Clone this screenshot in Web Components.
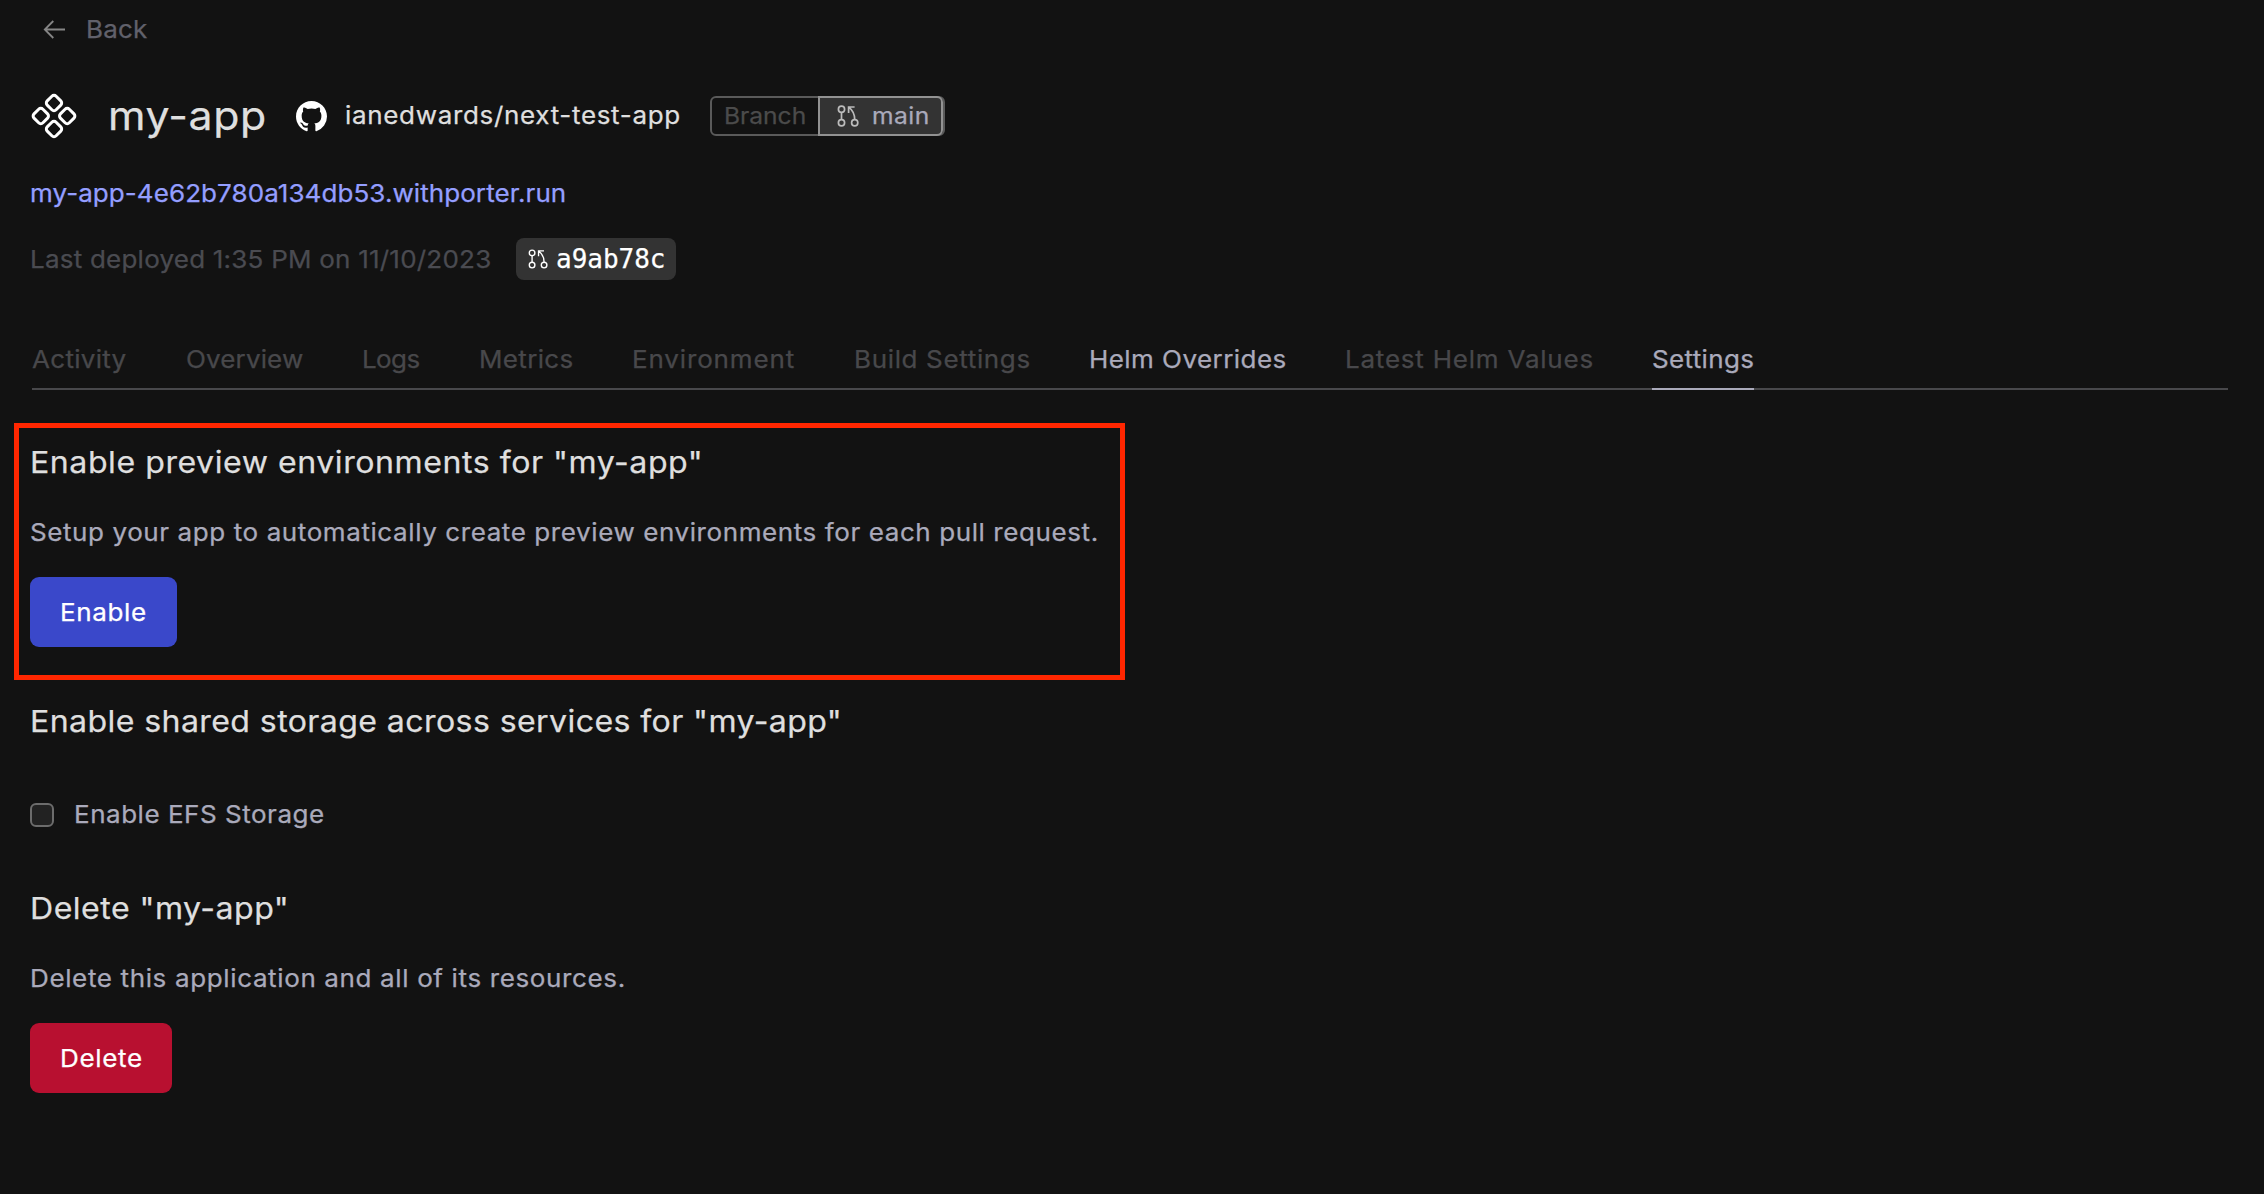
<!DOCTYPE html>
<html lang="en">
<head>
<meta charset="utf-8">
<title>my-app</title>
<style>
html,body{margin:0;height:100%;background:#121212;overflow:hidden}
body{font-family:Inter,"Liberation Sans",sans-serif;color:#dfdfdf}
</style>
</head>
<body>
<app-page></app-page>
<script>
const define=(name,html,setup)=>customElements.define(name,class extends HTMLElement{
  connectedCallback(){
    if(this.shadowRoot)return;
    this.attachShadow({mode:'open'}).innerHTML=html;
    if(setup)setup.call(this,this.shadowRoot);
  }
});

/* A single line of text, slightly widened and tracked out to a given width. */
define('fit-text',`<style>:host{display:block;white-space:pre;font-size:24.3px;line-height:32px}span{display:inline-block;transform-origin:0 50%;-webkit-text-stroke:.25px currentColor}</style><span></span>`,function(root){
  const s=root.querySelector('span'),w=+this.getAttribute('w'),t=this.getAttribute('text');
  const inset=+(this.getAttribute('inset')??.4),k=+(this.getAttribute('stretch')??1.07);
  s.textContent=t;
  this.style.width=w+'px';
  const n=s.getBoundingClientRect().width;
  s.style.letterSpacing=(((w-2*inset)/k-n)/(t.length-1)).toFixed(4)+'px';
  s.style.marginLeft=inset+'px';
  s.style.transform='scaleX('+k+')';
});

define('pr-icon',`<style>:host{display:block;flex:none}svg{display:block;width:100%;height:100%}</style>
<svg viewBox="0 0 22 22" fill="none" stroke="currentColor" stroke-width="var(--sw,1.7)"><circle cx="4.5" cy="4.3" r="3.1"/><circle cx="4.5" cy="17.7" r="3.1"/><circle cx="17.7" cy="17.7" r="3.1"/><path d="M4.5 7.4v7.2M17.7 14.6C17.7 9 16 5.5 12 2.4M11.6 8V2h6"/></svg>`);

define('app-back',`<style>:host{display:flex;align-items:center;height:30px;padding-left:13px;gap:21px;color:#61616b}svg{display:block}fit-text{margin-bottom:1px}</style>
<svg width="22" height="20" viewBox="0 0 22 20" fill="none" stroke="#868686" stroke-width="1.8"><path d="M22 10.5H2M10.3 2 1.8 10.5l8.5 8.5"/></svg><fit-text w="62" text="Back"></fit-text>`);

define('branch-badge',`<style>
:host{display:flex;box-sizing:border-box;width:235px;height:40px;border:2px solid #5a5a5a;border-radius:6px;background:#121212}
.l{width:106px;padding:4px 0 0 12px;box-sizing:border-box;color:#4b4b4b}
.r{display:flex;box-sizing:border-box;width:125px;height:40px;margin-top:-2px;border:2px solid #929292;border-radius:0 6px 6px 0;background:#333;padding:4px 0 0 17px;gap:13px;color:#aaaabb}
pr-icon{width:22px;height:22px;margin-top:3px;color:#bcbcbc}
fit-text{font-size:23px;line-height:28px}
</style><div class="l"><fit-text w="83" text="Branch"></fit-text></div><div class="r"><pr-icon></pr-icon><fit-text w="58" text="main"></fit-text></div>`);

define('app-header',`<style>
:host{display:flex;height:50px;align-items:center}
.logo{width:46px;height:46px;margin-left:1px}
.h{font-size:40px;line-height:50px;margin-left:31px}
.gh{margin-left:29px}
.repo{margin:0 0 2px 18px}
branch-badge{margin-left:29px}
svg{display:block}
</style>
<svg class="logo" viewBox="0 0 46 46" fill="none" stroke="#fff" stroke-width="3"><rect x="-6.3" y="-6.3" width="12.6" height="12.6" rx="3" transform="translate(23 10) rotate(45)"/><rect x="-6.3" y="-6.3" width="12.6" height="12.6" rx="3" transform="translate(23 36) rotate(45)"/><rect x="-6.3" y="-6.3" width="12.6" height="12.6" rx="3" transform="translate(9.8 23) rotate(45)"/><rect x="-6.3" y="-6.3" width="12.6" height="12.6" rx="3" transform="translate(36.2 23) rotate(45)"/></svg>
<fit-text class="h" w="159" text="my-app"></fit-text>
<svg class="gh" width="31" height="31" viewBox="0 0 16 16" fill="#fff"><path d="M8 0C3.58 0 0 3.58 0 8c0 3.54 2.29 6.53 5.47 7.59.4.07.55-.17.55-.38 0-.19-.01-.82-.01-1.49-2.01.37-2.53-.49-2.69-.94-.09-.23-.48-.94-.82-1.13-.28-.15-.68-.52-.01-.53.63-.01 1.08.58 1.23.82.72 1.21 1.87.87 2.33.66.07-.52.28-.87.51-1.07-1.78-.2-3.64-.89-3.64-3.95 0-.87.31-1.59.82-2.15-.08-.2-.36-1.02.08-2.12 0 0 .67-.21 2.2.82.64-.18 1.32-.27 2-.27s1.36.09 2 .27c1.53-1.04 2.2-.82 2.2-.82.44 1.1.16 1.92.08 2.12.51.56.82 1.27.82 2.15 0 3.07-1.87 3.75-3.65 3.95.29.25.54.73.54 1.48 0 1.07-.01 1.93-.01 2.2 0 .21.15.46.55.38A8.01 8.01 0 0 0 16 8c0-4.42-3.58-8-8-8z"/></svg>
<fit-text class="repo" w="336" text="ianedwards/next-test-app"></fit-text>
<branch-badge></branch-badge>`);

define('deploy-info',`<style>
:host{display:flex;align-items:center;height:42px;color:#4a4b51;gap:24px}
.chip{display:flex;box-sizing:border-box;width:160px;height:42px;border-radius:8px;background:#333;color:#fff;align-items:center;padding-left:12px;gap:8px}
pr-icon{width:20px;height:20px;--sw:1.5}
.chip fit-text{font-family:"DejaVu Sans Mono",monospace;font-size:26px}
</style><fit-text w="462" text="Last deployed 1:35 PM on 11/10/2023"></fit-text><div class="chip"><pr-icon></pr-icon><fit-text inset="0" stretch="1" w="109.5" text="a9ab78c"></fit-text></div>`);

define('tab-item',`<style>:host{display:block;height:47px;box-sizing:border-box;color:#48484b;border-bottom:2px solid transparent}:host([lit]){color:#aaaabb}:host([active]){color:#aaaabb;border-color:#aaaabb}</style><slot></slot>`);
define('tab-bar',`<style>:host{display:flex;gap:58.25px;border-bottom:2px solid #48484b;height:45px;width:2196px}</style>
<tab-item><fit-text w="95" text="Activity"></fit-text></tab-item>
<tab-item><fit-text w="118" text="Overview"></fit-text></tab-item>
<tab-item><fit-text w="59" text="Logs"></fit-text></tab-item>
<tab-item><fit-text w="95" text="Metrics"></fit-text></tab-item>
<tab-item><fit-text w="163" text="Environment"></fit-text></tab-item>
<tab-item><fit-text w="177" text="Build Settings"></fit-text></tab-item>
<tab-item lit><fit-text w="198" text="Helm Overrides"></fit-text></tab-item>
<tab-item><fit-text w="249" text="Latest Helm Values"></fit-text></tab-item>
<tab-item active><fit-text w="102" inset="0" text="Settings"></fit-text></tab-item>`);

define('app-button',`<style>:host{display:flex;box-sizing:border-box;height:70px;border-radius:9px;background:var(--bg);color:#fff;align-items:center;padding-left:30px;width:var(--w)}</style><slot></slot>`);
define('check-row',`<style>:host{display:flex;align-items:center;height:32px;gap:20px;color:#aaaabb}i{box-sizing:border-box;width:24px;height:24px;border:2px solid #6c6c6c;border-radius:6px;background:#222}::slotted(fit-text){margin-bottom:2px}</style><i></i><slot></slot>`);

define('settings-section',`<style>:host{display:flex;flex-direction:column;align-items:flex-start;color:#aaaabb}
.title{color:#dfdfdf;display:block;margin-bottom:var(--gap,36px)}
::slotted([slot=title]){font-size:30px;line-height:36px}</style>
<div class="title"><slot name="title"></slot></div><slot></slot>`);

define('app-page',`<style>
:host{display:flex;flex-direction:column;box-sizing:border-box;width:2264px;height:1194px;padding:14px 36px 0 30px;background:#121212}
app-header{margin-top:47px}
.url{color:#949eff;margin-top:36px}
deploy-info{margin-top:29px}
tab-bar{margin:63px 0 0 2px}
.preview{box-sizing:border-box;width:1111px;height:257px;margin:33px 0 0 -16px;border:5px solid #ff2600;padding:16px 0 0 11px}
.d{margin-bottom:29px}
.shared{margin-top:23px;--gap:60px}
.delete{margin-top:59px}
</style>
<app-back></app-back>
<app-header></app-header>
<fit-text class="url" w="537" text="my-app-4e62b780a134db53.withporter.run"></fit-text>
<deploy-info></deploy-info>
<tab-bar></tab-bar>
<settings-section class="preview"><fit-text slot="title" inset="-.4" w="672" text='Enable preview environments for "my-app"'></fit-text><fit-text class="d" w="1069" text="Setup your app to automatically create preview environments for each pull request."></fit-text><app-button style="--bg:#3a48ca;--w:147px"><fit-text w="87" text="Enable"></fit-text></app-button></settings-section>
<settings-section class="shared"><fit-text slot="title" inset="-.4" w="811" text='Enable shared storage across services for "my-app"'></fit-text><check-row><fit-text w="251" text="Enable EFS Storage"></fit-text></check-row></settings-section>
<settings-section class="delete"><fit-text slot="title" inset="-.4" w="258" text='Delete "my-app"'></fit-text><fit-text class="d" w="596" text="Delete this application and all of its resources."></fit-text><app-button style="--bg:#b81030;--w:142px"><fit-text w="83" text="Delete"></fit-text></app-button></settings-section>`);
</script>
</body>
</html>
